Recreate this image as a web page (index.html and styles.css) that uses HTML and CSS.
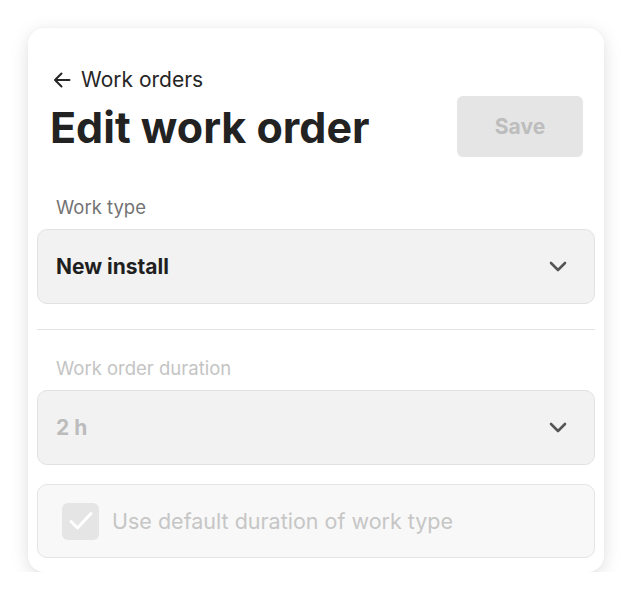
FILE: index.html
```html
<!DOCTYPE html>
<html lang="en">
<head>
<meta charset="utf-8">
<title>Edit work order</title>
<link rel="stylesheet" href="styles.css">
</head>
<body>
<div class="card">
  <header class="header">
    <a class="back" href="#">
      <svg class="back-icon" width="18" height="16" viewBox="0 0 18 16" fill="none" stroke="currentColor" stroke-width="2" stroke-linecap="round" stroke-linejoin="round"><path d="M16.5 8H2M8.5 1.5L2 8l6.5 6.5"/></svg>
      <span>Work orders</span>
    </a>
    <div class="title-row">
      <h1 class="title">Edit work order</h1>
      <button class="save" disabled>Save</button>
    </div>
  </header>

  <section class="field">
    <div class="label">Work type</div>
    <div class="select">
      <span class="value">New install</span>
      <svg class="chev" width="18" height="11" viewBox="0 0 18 11" fill="none" stroke="currentColor" stroke-width="2.6" stroke-linecap="round" stroke-linejoin="round"><path d="M2 2l7 7 7-7"/></svg>
    </div>
  </section>

  <hr class="divider">

  <section class="field disabled">
    <div class="label">Work order duration</div>
    <div class="select">
      <span class="value">2 h</span>
      <svg class="chev" width="18" height="11" viewBox="0 0 18 11" fill="none" stroke="currentColor" stroke-width="2.6" stroke-linecap="round" stroke-linejoin="round"><path d="M2 2l7 7 7-7"/></svg>
    </div>
    <label class="check-row">
      <span class="checkbox">
        <svg width="26" height="22" viewBox="0 0 26 22" fill="none" stroke="#fff" stroke-width="3" stroke-linecap="round" stroke-linejoin="round"><path d="M3 11.5l6.5 6.5L23 3.5"/></svg>
      </span>
      <span class="check-text">Use default duration of work type</span>
    </label>
  </section>
</div>
</body>
</html>
```

FILE: styles.css
```css
* { box-sizing: border-box; }

html, body {
  margin: 0;
  padding: 0;
  background: #ffffff;
}

body {
  font-family: Inter, "Noto Sans", "Liberation Sans", sans-serif;
  color: #252525;
  padding: 28px 28px 0 28px;
}

.card {
  width: 576px;
  height: 544px;
  background: #ffffff;
  border-radius: 16px;
  box-shadow: 0 4px 18px rgba(0, 0, 0, 0.13), 0 0 2px rgba(0, 0, 0, 0.04);
  padding: 40px 9px 15px 9px;
}

.header {
  padding: 0 12px 0 13px;
}

.back {
  display: flex;
  align-items: center;
  gap: 10px;
  height: 24px;
  font-size: 21px;
  line-height: 24px;
  color: #262626;
  text-decoration: none;
  padding-left: 3px;
}

.back-icon {
  display: block;
}

.title-row {
  display: flex;
  align-items: center;
  justify-content: space-between;
  margin-top: 4px;
}

.title {
  margin: 0;
  font-size: 43px;
  font-weight: 700;
  line-height: 52px;
  color: #222222;
}

.save {
  width: 126px;
  height: 61px;
  border: none;
  border-radius: 6px;
  background: #e5e5e5;
  color: #bdbdbd;
  font-family: inherit;
  font-size: 21px;
  font-weight: 700;
}

.field {
  display: flex;
  flex-direction: column;
}

.header + .field {
  margin-top: 38px;
}

.label {
  font-size: 18.5px;
  line-height: 24px;
  color: #737373;
  padding-left: 19px;
  margin-bottom: 10px;
}

.select {
  height: 75px;
  border: 1px solid #e2e2e2;
  border-radius: 10px;
  background: #f2f2f2;
  display: flex;
  align-items: center;
  justify-content: space-between;
  padding: 0 27px 0 18px;
}

.value {
  font-size: 21px;
  font-weight: 700;
  color: #1f1f1f;
}

.chev {
  display: block;
  color: #555555;
}

.divider {
  border: none;
  border-top: 1px solid #e3e3e3;
  margin: 25px 0 26px 0;
}

.disabled .label {
  color: #c4c4c4;
}

.disabled .value {
  color: #bcbcbc;
}

.check-row {
  margin-top: 19px;
  height: 74px;
  border: 1px solid #e4e4e4;
  border-radius: 10px;
  background: #f8f8f8;
  display: flex;
  align-items: center;
  gap: 13px;
  padding: 0 24px;
}

.checkbox {
  width: 37px;
  height: 37px;
  border-radius: 6px;
  background: #e5e5e5;
  display: flex;
  align-items: center;
  justify-content: center;
}

.check-text {
  font-size: 21.5px;
  color: #c6c6c6;
}
```
